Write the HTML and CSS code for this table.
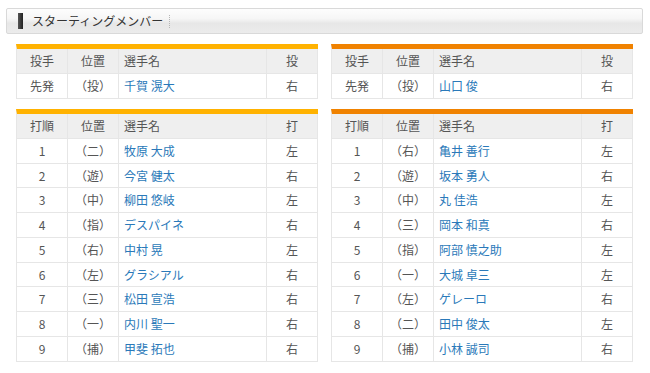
FILE: index.html
```html
<!DOCTYPE html>
<html lang="ja">
<head>
<meta charset="utf-8">
<link rel="stylesheet" href="styles.css">
</head>
<body>
<div class="page">
  <div class="titlebar">
    <span class="mark"></span>
    <span class="title">スターティングメンバー</span>
    <span class="sep"></span>
  </div>
  <div class="lineups">
    <table class="tbl home">
      <tr class="head"><td class="c1">投手</td><td class="c2">位置</td><td class="c3">選手名</td><td class="c4">投</td></tr>
      <tr><td>先発</td><td>（投）</td><td class="name">千賀 滉大</td><td>右</td></tr>
    </table>
    <table class="tbl away">
      <tr class="head"><td class="c1">投手</td><td class="c2">位置</td><td class="c3">選手名</td><td class="c4">投</td></tr>
      <tr><td>先発</td><td>（投）</td><td class="name">山口 俊</td><td>右</td></tr>
    </table>
    <table class="tbl home bat">
      <tr class="head"><td class="c1">打順</td><td class="c2">位置</td><td class="c3">選手名</td><td class="c4">打</td></tr>
      <tr><td>1</td><td>（二）</td><td class="name">牧原 大成</td><td>左</td></tr>
      <tr><td>2</td><td>（遊）</td><td class="name">今宮 健太</td><td>右</td></tr>
      <tr><td>3</td><td>（中）</td><td class="name">柳田 悠岐</td><td>左</td></tr>
      <tr><td>4</td><td>（指）</td><td class="name">デスパイネ</td><td>右</td></tr>
      <tr><td>5</td><td>（右）</td><td class="name">中村 晃</td><td>左</td></tr>
      <tr><td>6</td><td>（左）</td><td class="name">グラシアル</td><td>右</td></tr>
      <tr><td>7</td><td>（三）</td><td class="name">松田 宣浩</td><td>右</td></tr>
      <tr><td>8</td><td>（一）</td><td class="name">内川 聖一</td><td>右</td></tr>
      <tr><td>9</td><td>（捕）</td><td class="name">甲斐 拓也</td><td>右</td></tr>
    </table>
    <table class="tbl away bat">
      <tr class="head"><td class="c1">打順</td><td class="c2">位置</td><td class="c3">選手名</td><td class="c4">打</td></tr>
      <tr><td>1</td><td>（右）</td><td class="name">亀井 善行</td><td>左</td></tr>
      <tr><td>2</td><td>（遊）</td><td class="name">坂本 勇人</td><td>右</td></tr>
      <tr><td>3</td><td>（中）</td><td class="name">丸 佳浩</td><td>左</td></tr>
      <tr><td>4</td><td>（三）</td><td class="name">岡本 和真</td><td>右</td></tr>
      <tr><td>5</td><td>（指）</td><td class="name">阿部 慎之助</td><td>左</td></tr>
      <tr><td>6</td><td>（一）</td><td class="name">大城 卓三</td><td>左</td></tr>
      <tr><td>7</td><td>（左）</td><td class="name">ゲレーロ</td><td>右</td></tr>
      <tr><td>8</td><td>（二）</td><td class="name">田中 俊太</td><td>左</td></tr>
      <tr><td>9</td><td>（捕）</td><td class="name">小林 誠司</td><td>右</td></tr>
    </table>
  </div>
</div>
</body>
</html>
```
FILE: styles.css
```css
html, body {
  margin: 0;
  padding: 0;
  background: #fff;
}
body {
  font-family: "Noto Sans CJK JP", "Noto Sans", sans-serif;
  color: #555;
  font-size: 12px;
}
.page {
  padding: 8px 7px 0 6px;
  width: 637px;
}
.titlebar {
  height: 24px;
  border: 1px solid #d9d9d9;
  border-radius: 2px;
  background: linear-gradient(#fdfdfd 0%, #f6f6f6 40%, #e7e7e7 60%, #ececec 100%);
  display: flex;
  align-items: center;
  padding-left: 11px;
}
.mark {
  width: 5px;
  height: 16px;
  background: linear-gradient(90deg, #555, #222);
}
.title {
  margin-left: 9px;
  font-size: 12px;
  color: #333;
  line-height: 16px;
}
.sep {
  margin-left: 6px;
  width: 0;
  height: 13px;
  border-left: 1px dotted #b5b5b5;
}
.lineups {
  display: grid;
  grid-template-columns: 301px 301px;
  column-gap: 14px;
  row-gap: 10px;
  padding: 10px 0 0 10px;
  align-items: start;
}
.tbl {
  width: 301px;
  border-spacing: 0;
  border-collapse: separate;
  border-top: 5px solid #ffb200;
  border-left: 1px solid #e6e6e6;
  table-layout: fixed;
}
.tbl.away {
  border-top-color: #f08200;
}
.tbl td {
  padding: 0;
  border-right: 1px solid #e6e6e6;
  border-bottom: 1px solid #e6e6e6;
  text-align: center;
  line-height: 23.75px;
  color: #555;
  white-space: nowrap;
}
.tbl .head td {
  background: #efefef;
  line-height: 24px;
}
.tbl .head .c3,
.tbl td.name {
  text-align: left;
  padding-left: 5px;
}
.tbl td.name {
  color: #2a79b9;
}
.c1 { width: 50px; }
.c2 { width: 50px; }
.c3 { width: 142px; }
.c4 { width: 50px; }
```
